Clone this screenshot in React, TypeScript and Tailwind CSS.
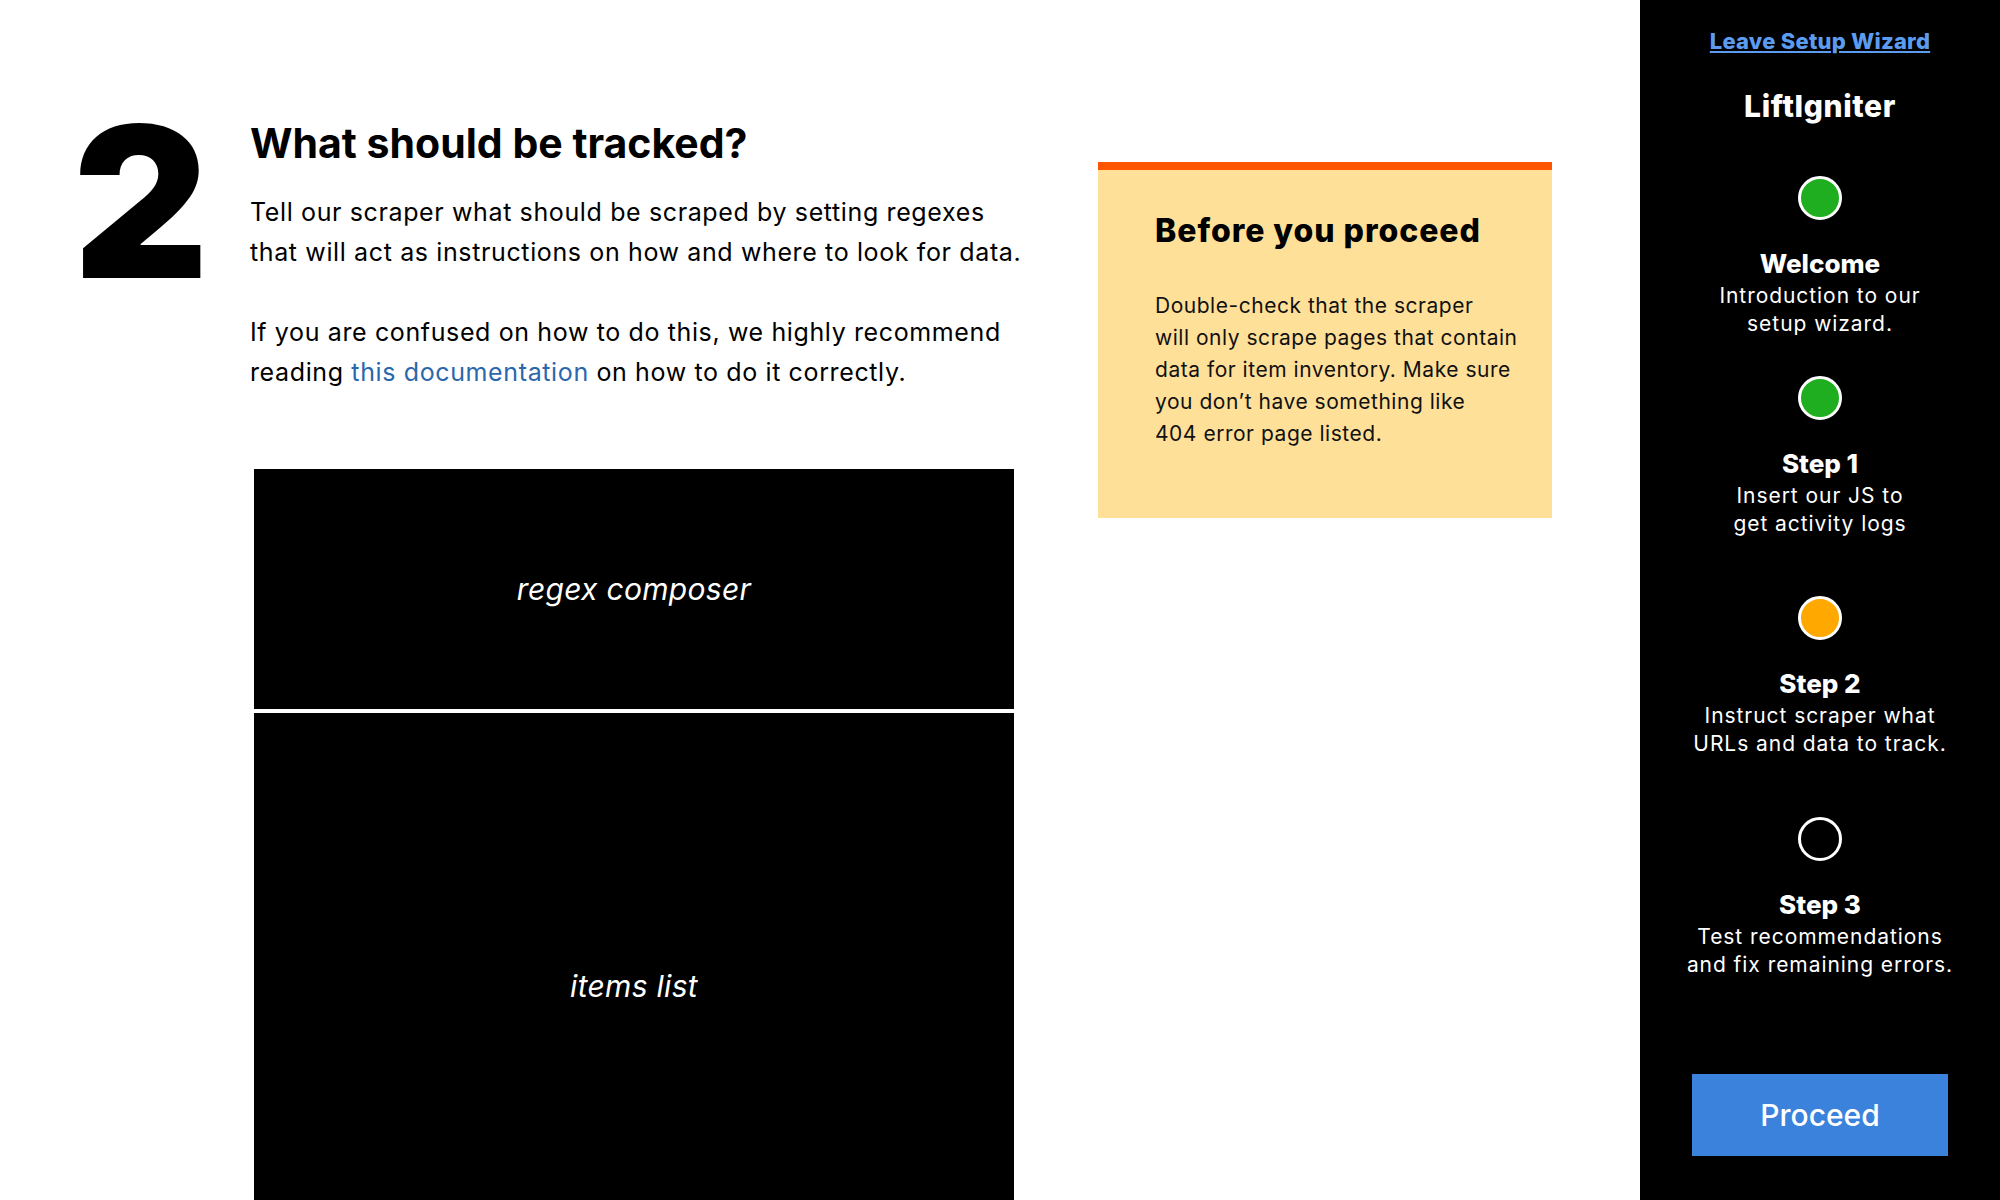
const steps = [
  {
    title: "Welcome",
    lines: ["Introduction to our", "setup wizard."],
    state: "done",
    gap: "mt-[52px]",
  },
  {
    title: "Step 1",
    lines: ["Insert our JS to", "get activity logs"],
    state: "done",
    gap: "mt-[38px]",
  },
  {
    title: "Step 2",
    lines: ["Instruct scraper what", "URLs and data to track."],
    state: "current",
    gap: "mt-[58px]",
  },
  {
    title: "Step 3",
    lines: ["Test recommendations", "and fix remaining errors."],
    state: "todo",
    gap: "mt-[59px]",
  },
];

function StepDot({ state }: { state: string }) {
  if (state === "done") {
    return <div className="w-[44px] h-[44px] rounded-full border-[3px] border-white bg-[#1fae1f]" />;
  }
  if (state === "current") {
    return <div className="w-[44px] h-[44px] rounded-full border-[3px] border-white bg-[#ffa800]" />;
  }
  return <div className="w-[44px] h-[44px] rounded-full border-[3px] border-white bg-black" />;
}

function Sidebar() {
  return (
    <aside className="w-[360px] h-full bg-black text-white flex flex-col items-center text-center shrink-0">
      <a
        href="#"
        className="mt-[27px] text-[22px] leading-[28px] font-extrabold tracking-[0.01em] text-[#5b9cf0] underline underline-offset-2 decoration-2"
      >
        Leave Setup Wizard
      </a>
      <div className="mt-[33px] text-[30px] leading-[36px] font-extrabold tracking-[0.02em]">LiftIgniter</div>

      {steps.map((s) => (
        <div key={s.title} className={`flex flex-col items-center ${s.gap}`}>
          <StepDot state={s.state} />
          <div className="mt-[29px] text-[26px] leading-[30px] font-extrabold">{s.title}</div>
          <p className="mt-[3px] text-[21px] leading-[28px] tracking-[0.045em] whitespace-nowrap">
            {s.lines[0]}
            <br />
            {s.lines[1]}
          </p>
        </div>
      ))}

      <button className="mt-auto mb-[44px] w-[256px] h-[82px] bg-[#3a82dc] text-white text-[30px] font-medium">
        Proceed
      </button>
    </aside>
  );
}

function Notice() {
  return (
    <div className="ml-[80px] mt-[162px] w-[454px] h-[356px] shrink-0 bg-[#ffe098] border-t-8 border-[#ff5400] pl-[57px]">
      <h2 className="mt-[41px] text-[32px] leading-[40px] font-extrabold tracking-[0.03em] text-black">
        Before you proceed
      </h2>
      <p className="mt-[39px] text-[21px] leading-[32px] tracking-[0.025em] text-[#111] whitespace-nowrap">
        Double-check that the scraper
        <br />
        will only scrape pages that contain
        <br />
        data for item inventory. Make sure
        <br />
        you don’t have something like
        <br />
        404 error page listed.
      </p>
    </div>
  );
}

export default function App() {
  return (
    <div
      className="w-[2000px] h-[1200px] overflow-hidden flex bg-white text-black"
      style={{ fontFamily: "Inter, 'Noto Sans', sans-serif" }}
    >
      <main className="flex-1 flex items-start pl-[73px]">
        {/* step number */}
        <div className="w-[177px] shrink-0 mt-[97px] text-[210px] leading-none font-black tracking-tight">2</div>

        <div className="w-[768px] shrink-0 pt-[119px]">
          <h1 className="text-[41px] leading-[48px] font-bold">What should be tracked?</h1>
          <p className="mt-[25px] text-[25px] leading-[40px] tracking-[0.025em] whitespace-nowrap">
            Tell our scraper what should be scraped by setting regexes
            <br />
            that will act as instructions on how and where to look for data.
          </p>
          <p className="mt-10 text-[25px] leading-[40px] tracking-[0.025em] whitespace-nowrap">
            If you are confused on how to do this, we highly recommend
            <br />
            reading{" "}
            <a href="#" className="text-[#2a67ad]">
              this documentation
            </a>{" "}
            on how to do it correctly.
          </p>

          <div className="mt-[77px] ml-[4px] w-[760px] flex flex-col gap-[4px]">
            <div className="h-[240px] bg-black flex items-center justify-center">
              <span className="text-white italic text-[30px] tracking-[0.01em]">regex composer</span>
            </div>
            <div className="h-[546px] bg-black flex items-center justify-center">
              <span className="text-white italic text-[30px] tracking-[0.01em]">items list</span>
            </div>
          </div>
        </div>

        <Notice />
      </main>

      <Sidebar />
    </div>
  );
}
